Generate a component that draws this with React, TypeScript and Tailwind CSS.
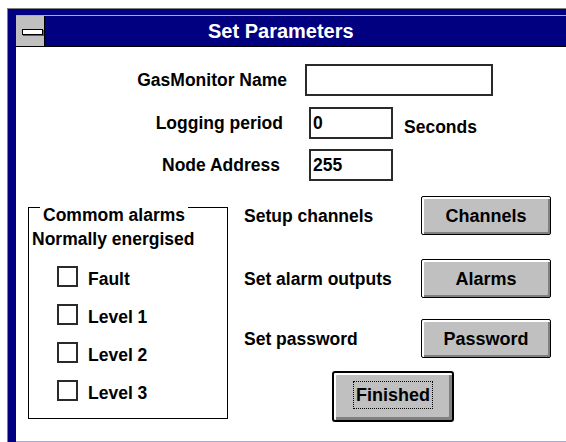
const font = { fontFamily: '"Liberation Sans", Arial, sans-serif' };

function Field({ label, labelW, gap, boxW, value }: { label: string; labelW: string; gap: string; boxW: string; value?: string }) {
  return (
    <div className="flex items-center">
      <span className={`${labelW} shrink-0 text-right`}>{label}</span>
      <div className={`${gap} ${boxW} h-[32px] border-2 border-[#2a2a2a] bg-white pl-[2px] flex items-center`}>
        {value}
      </div>
    </div>
  );
}

function Check({ label }: { label: string }) {
  return (
    <div className="flex items-start h-[21px]">
      <div className="w-[21px] h-[21px] border-2 border-[#2a2a2a] bg-white shrink-0" />
      <span className="ml-[10px] mt-[3px]">{label}</span>
    </div>
  );
}

function Button({ label }: { label: string }) {
  return (
    <div className="w-[130px] h-[39px] shrink-0 rounded-[2px] border border-black bg-[#c0c0c0] shadow-[inset_2px_2px_0_#ffffff,inset_-2px_-2px_0_#808080] flex items-center justify-center text-[18px]">
      {label}
    </div>
  );
}

export default function App() {
  return (
    <div className="w-[566px] h-[442px] bg-white pt-2 pl-[7px] overflow-hidden text-black font-bold text-[17.5px] leading-[20px]" style={font}>
      <div className="w-[600px] h-[434px] border-t border-l border-[#808080] bg-[#000080] pt-[6px] pl-[8px]">
        <div className="border-t border-[#a8a8dc]">
          {/* title bar */}
          <div className="h-[31px] flex border-b border-black">
            <div className="w-[29px] h-[30px] bg-[#c0c0c0] border-r border-black flex items-center justify-center">
              <div className="w-[21px] h-[6px] ml-[4px] mt-[2px] border border-black bg-white shadow-[1px_1px_0_#606060]" />
            </div>
            <div className="flex-1 flex items-center">
              <span className="ml-[163px] text-white text-[20px]">Set Parameters</span>
            </div>
          </div>

          {/* client area */}
          <div className="h-[395px] bg-white border-b border-[#a8a8dc] pt-[17px]">
            <Field label="GasMonitor Name" labelW="w-[271px]" gap="ml-[18px]" boxW="w-[188px]" />
            <div className="flex items-center mt-[11px]">
              <span className="w-[267px] shrink-0 text-right">Logging period</span>
              <div className="ml-[26px] w-[84px] h-[32px] border-2 border-[#2a2a2a] pl-[2px] flex items-center">0</div>
              <span className="ml-[11px] mt-[8px]">Seconds</span>
            </div>
            <div className="mt-[10px]">
              <Field label="Node Address" labelW="w-[264px]" gap="ml-[29px]" boxW="w-[84px]" value="255" />
            </div>

            <div className="flex mt-[15px]">
              {/* group box */}
              <div className="ml-[12px] mt-[11px] w-[200px] h-[212px] border border-black shrink-0">
                <div className="-mt-[3px] ml-[11px] px-[3px] bg-white w-fit">Commom alarms</div>
                <div className="mt-[4px] pl-[3px]">Normally energised</div>
                <div className="pl-[28px] mt-[17px] flex flex-col gap-[17px]">
                  <Check label="Fault" />
                  <Check label="Level 1" />
                  <Check label="Level 2" />
                  <Check label="Level 3" />
                </div>
              </div>

              {/* actions */}
              <div className="ml-[16px] flex flex-col">
                <div className="flex items-center">
                  <span className="w-[177px] shrink-0">Setup channels</span>
                  <Button label="Channels" />
                </div>
                <div className="flex items-center mt-[24px]">
                  <span className="w-[177px] shrink-0">Set alarm outputs</span>
                  <Button label="Alarms" />
                </div>
                <div className="flex items-center mt-[21px]">
                  <span className="w-[177px] shrink-0">Set password</span>
                  <Button label="Password" />
                </div>
                <div className="ml-[88px] mt-[13px] w-[122px] h-[51px] rounded-[3px] border-2 border-black bg-[#c0c0c0] shadow-[inset_2px_2px_0_#ffffff,inset_-3px_-3px_0_#808080] flex items-center justify-center">
                  <span className="border border-dotted border-black px-[2px] py-[3px] text-[18px] -mt-[4px]">Finished</span>
                </div>
              </div>
            </div>
          </div>
        </div>
      </div>
    </div>
  );
}
